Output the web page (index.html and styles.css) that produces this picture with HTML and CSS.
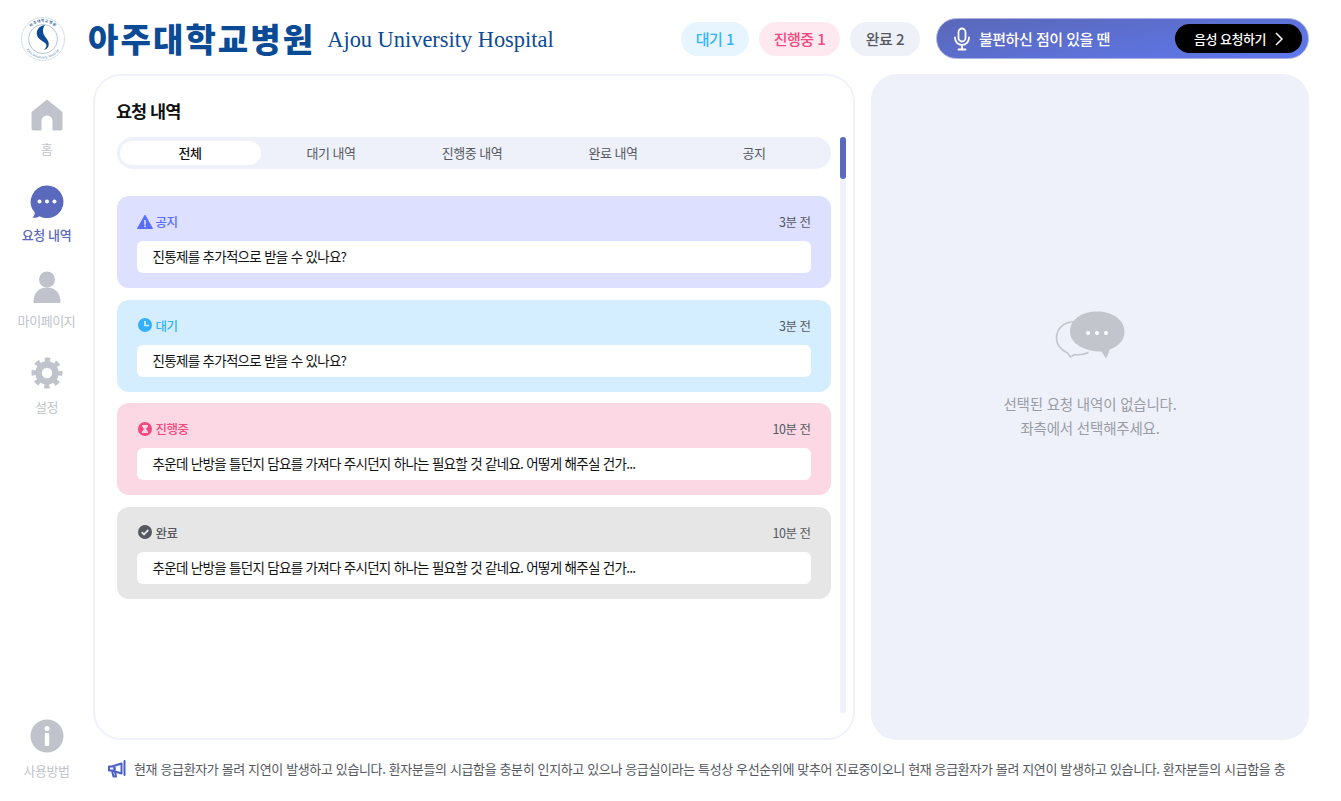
FILE: index.html
```html
<!DOCTYPE html>
<html lang="ko">
<head>
<meta charset="utf-8">
<title>요청 내역</title>
<link rel="stylesheet" href="styles.css">
</head>
<body>
<div class="app">
  <header class="header">
    <div class="brand">
      <svg class="logo" viewBox="0 0 44 46" width="44" height="46">
        <defs>
          <path id="ring-top" d="M5 23a17 17 0 0 1 34 0"/>
          <path id="ring-bot" d="M2.500 23a19.500 19.500 0 0 0 39 0"/>
        </defs>
        <circle cx="22" cy="23" r="21.500" fill="none" stroke="#9db5d3" stroke-width=".7" stroke-dasharray="1 .6"/>
        <circle cx="22" cy="23" r="14.500" fill="none" stroke="#7f9fc6" stroke-width=".6"/>
        <text class="logo-ring"><textPath href="#ring-top" startOffset="50%" text-anchor="middle">아주대학교병원</textPath></text>
        <text class="logo-ring logo-ring-en"><textPath href="#ring-bot" startOffset="50%" text-anchor="middle">Ajou University Hospital</textPath></text>
        <path d="M24 9C18 10 15 14 16 19 17 24 23 25 25 28 26 30 25 32 23 34 27 33 29 29 27 25 25 21 22 19 22 15 22 12 23 10 24 9z" fill="#0b4a94"/>
      </svg>
      <span class="brand-ko">아주대학교병원</span>
      <span class="brand-en">Ajou University Hospital</span>
    </div>
    <div class="header-right">
      <span class="pill pill-wait">대기 1</span>
      <span class="pill pill-prog">진행중 1</span>
      <span class="pill pill-done">완료 2</span>
      <div class="voice">
        <svg class="voice-mic" viewBox="0 0 18 24" width="18" height="24" fill="none" stroke="#fff" stroke-width="1.800" stroke-linecap="round">
          <rect x="5.500" y="1.500" width="7" height="13" rx="3.500"/>
          <path d="M2 10.500c0 4.500 3 7.500 7 7.500s7-3 7-7.500M9 18v4M5.500 22.500h7"/>
        </svg>
        <span class="voice-text">불편하신 점이 있을 땐</span>
        <span class="voice-btn">음성 요청하기
          <svg viewBox="0 0 8 14" width="8" height="14" fill="none" stroke="#fff" stroke-width="1.500"><path d="M1 1l6 6-6 6"/></svg>
        </span>
      </div>
    </div>
  </header>

  <nav class="side">
    <div class="side-top">
      <a class="nav">
        <svg viewBox="0 0 32 32" width="32" height="32"><path d="M16 0.500 31.500 13v16.500a2 2 0 0 1-2 2H21.500V22a5.500 5.500 0 0 0-11 0v9.500H2.500a2 2 0 0 1-2-2V13z" fill="#c1c3cc"/></svg>
        <span>홈</span>
      </a>
      <a class="nav nav-on">
        <svg viewBox="0 -1 34 34" width="34" height="34"><path d="M17 .5a16.300 16.300 0 1 1-7.500 30.700c-2 1.300-4.500 1.800-7 1.500 1.500-1.500 2.300-3.300 2.300-5.200A16.300 16.300 0 0 1 17 .5z" fill="#5b69bd"/><circle cx="9.500" cy="16.500" r="2" fill="#fff"/><circle cx="17" cy="16.500" r="2" fill="#fff"/><circle cx="24.500" cy="16.500" r="2" fill="#fff"/></svg>
        <span>요청 내역</span>
      </a>
      <a class="nav">
        <svg viewBox="0 0 28 32" width="28" height="32"><circle cx="14" cy="8.500" r="8" fill="#c1c3cc"/><path d="M0.500 31c0-9 5-14.500 13.500-14.500S27.500 22 27.500 31a1 1 0 0 1-1 1h-25a1 1 0 0 1-1-1z" fill="#c1c3cc"/></svg>
        <span>마이페이지</span>
      </a>
      <a class="nav">
        <svg viewBox="0 0 32 32" width="32" height="32" fill="none" stroke="#c1c3cc"><circle cx="16" cy="16" r="8.500" stroke-width="6.500"/><circle cx="16" cy="16" r="13" stroke-width="5" stroke-dasharray="5.110 5.100" stroke-dashoffset="2.550"/></svg>
        <span>설정</span>
      </a>
    </div>
    <a class="nav nav-help">
      <svg viewBox="0 0 34 34" width="34" height="34"><circle cx="17" cy="17" r="16.500" fill="#c1c3cc"/><circle cx="17" cy="9.500" r="2.500" fill="#fff"/><rect x="14.800" y="14" width="4.400" height="13" rx="1" fill="#fff"/></svg>
      <span>사용방법</span>
    </a>
  </nav>

  <section class="list-panel">
    <h1 class="list-title">요청 내역</h1>
    <div class="list-body">
      <div class="list-main">
        <div class="tabs">
          <span class="tab tab-on">전체</span>
          <span class="tab">대기 내역</span>
          <span class="tab">진행중 내역</span>
          <span class="tab">완료 내역</span>
          <span class="tab">공지</span>
        </div>
        <div class="cards">
          <article class="card card-notice">
            <div class="card-head">
              <span class="status">
                <svg viewBox="0 0 16 16" width="16" height="16"><path d="M8 1.200 15.500 14.500H.5z" fill="currentColor" stroke="currentColor" stroke-linejoin="round"/><rect x="7.200" y="6" width="1.600" height="4.800" fill="#dee0ff"/><rect x="7.200" y="11.500" width="1.600" height="1.600" fill="#dee0ff"/></svg>공지</span>
              <time>3분 전</time>
            </div>
            <p class="card-msg">진통제를 추가적으로 받을 수 있나요?</p>
          </article>
          <article class="card card-wait">
            <div class="card-head">
              <span class="status">
                <svg viewBox="0 0 16 16" width="16" height="16"><circle cx="8" cy="8" r="7" fill="currentColor"/><path d="M8 4v4.500h4" fill="none" stroke="#d5eeff" stroke-width="1.700"/></svg>대기</span>
              <time>3분 전</time>
            </div>
            <p class="card-msg">진통제를 추가적으로 받을 수 있나요?</p>
          </article>
          <article class="card card-prog">
            <div class="card-head">
              <span class="status">
                <svg viewBox="0 0 16 16" width="16" height="16"><circle cx="8" cy="8" r="7" fill="currentColor"/><path d="M5 4h6v1.300L9 8l2 2.700V12H5v-1.300L7 8 5 5.300z" fill="#fbd8e3"/></svg>진행중</span>
              <time>10분 전</time>
            </div>
            <p class="card-msg">추운데 난방을 틀던지 담요를 가져다 주시던지 하나는 필요할 것 같네요. 어떻게 해주실 건가...</p>
          </article>
          <article class="card card-done">
            <div class="card-head">
              <span class="status">
                <svg viewBox="0 0 16 16" width="16" height="16"><circle cx="8" cy="8" r="7" fill="currentColor"/><path d="M4.700 8.200 7 10.400l4.300-4.400" fill="none" stroke="#e6e6e6" stroke-width="1.800"/></svg>완료</span>
              <time>10분 전</time>
            </div>
            <p class="card-msg">추운데 난방을 틀던지 담요를 가져다 주시던지 하나는 필요할 것 같네요. 어떻게 해주실 건가...</p>
          </article>
        </div>
      </div>
      <div class="scroll"><div class="scroll-thumb"></div></div>
    </div>
  </section>

  <section class="detail">
    <svg class="detail-icon" viewBox="0 0 70 50" width="70" height="50">
      <path d="M20 10.500C8 11 1.500 18 1.500 27c0 7 5 12 11 15l3 4 4-2.500c5 .5 10 0 14-2" fill="none" stroke="#c4c6ce" stroke-width="1.600"/>
      <path d="M42 .5c15 0 27.500 8 27.500 20 0 9-6 15-15 18-.5 3-2 6-3.500 9-1.500-2.500-3-5-5-7-15 0-31-7-31-20C15 8 28 .5 42 .5z" fill="#c3c5cd"/>
      <circle cx="33" cy="22" r="2" fill="#fff"/><circle cx="42" cy="22" r="2" fill="#fff"/><circle cx="51" cy="22" r="2" fill="#fff"/>
    </svg>
    <p class="detail-text">선택된 요청 내역이 없습니다.<br>좌측에서 선택해주세요.</p>
  </section>

  <footer class="ticker">
    <svg viewBox="0 0 19 18" width="19" height="18" fill="none" stroke="#4a5fc1" stroke-width="2" stroke-linejoin="round"><path d="M17.500 1v14" stroke-linecap="round"/><path d="M14.500 3.500 5 6.500H2v4h3l9.500 3z"/><path d="M7.500 7v3.300" stroke-width="2.500"/><path d="M5 11l1.500 5.500H9L8 11.500"/></svg>
    <p class="ticker-text">현재 응급환자가 몰려 지연이 발생하고 있습니다. 환자분들의 시급함을 충분히 인지하고 있으나 응급실이라는 특성상 우선순위에 맞추어 진료중이오니 현재 응급환자가 몰려 지연이 발생하고 있습니다. 환자분들의 시급함을 충</p>
  </footer>
</div>
</body>
</html>
```
FILE: styles.css
```css
* { box-sizing: border-box; margin: 0; padding: 0; }
html, body { width: 1341px; height: 801px; overflow: hidden; background: #fff; }
body { font-family: "Noto Sans CJK KR", "Noto Sans", sans-serif; color: #111; letter-spacing: -0.5px; }

.app {
  display: grid;
  grid-template-columns: 93px 762px 454px;
  grid-template-rows: 74px 666px 61px;
  width: 1341px;
  height: 801px;
}

/* header */
.header {
  grid-column: 1 / -1;
  display: flex;
  align-items: center;
  justify-content: space-between;
  padding: 3px 0 0 21px;
}
.brand { display: flex; align-items: center; }
.logo { flex: none; }
.logo-ring { font-size: 3.600px; font-weight: 700; fill: #2d5f9e; letter-spacing: .5px; }
.logo-ring-en { font-size: 3px; font-weight: 400; letter-spacing: .2px; }
.brand-ko { margin-left: 23px; font-size: 33px; font-weight: 900; color: #0b4a94; letter-spacing: 2.100px; line-height: 1; }
.brand-en { margin: 3px 0 0 12px; font-family: "Liberation Serif", serif; font-size: 22.400px; color: #0b4a94; letter-spacing: 0; line-height: 1; }

.header-right { display: flex; align-items: center; }
.pill { display: flex; align-items: center; justify-content: center; height: 34px; border-radius: 17px; font-size: 15px; font-weight: 500; margin-right: 10px; }
.pill-wait { width: 68px; background: #e6f5ff; color: #35b3ff; }
.pill-prog { width: 81px; background: #ffe9f0; color: #f5487f; }
.pill-done { width: 70px; background: #eef1f8; color: #55585f; margin-right: 16px; }

.voice {
  display: flex;
  align-items: center;
  width: 373px;
  height: 41px;
  padding: 0 6px 0 16px;
  border: 1px solid #a9b2e0;
  border-radius: 21px;
  background: linear-gradient(170deg, #5a68b8, #5f78ee);
}
.voice-mic { flex: none; }
.voice-text { margin-left: 8px; color: #fff; font-size: 15px; font-weight: 500; }
.voice-btn {
  display: flex; align-items: center; justify-content: center; gap: 9px;
  margin-left: auto; width: 127px; height: 29px;
  border-radius: 15px; background: #000; color: #fff; font-size: 13px; font-weight: 500;
}

/* sidebar */
.side { grid-row: 2 / 4; grid-column: 1; display: flex; flex-direction: column; justify-content: space-between; padding: 24px 0 21px; }
.side-top { display: flex; flex-direction: column; }
.nav { display: flex; flex-direction: column; align-items: center; height: 86px; font-size: 13px; letter-spacing: -0.4px; color: #c1c3cc; }
.nav svg { height: 34px; flex: none; }
.nav span { margin-top: 7px; line-height: 19px; }
.nav-on { color: #5b69bd; font-weight: 500; }
.nav-help { height: auto; }
.nav-help span { margin-top: 8px; }

/* list panel */
.list-panel {
  grid-row: 2; grid-column: 2;
  display: flex; flex-direction: column;
  padding: 23px 7px 24px 21.500px;
  border: 2px solid #f0f2fa;
  border-radius: 28px;
  background: #fff;
}
.list-title { margin-left: -0.500px; font-size: 17.500px; font-weight: 700; line-height: 24px; letter-spacing: -1px; color: #111; }
.list-body { display: flex; flex: 1; margin-top: 14px; min-height: 0; }
.list-main { width: 714px; flex: none; }
.tabs { display: grid; grid-template-columns: repeat(5, 141px); height: 32px; padding: 4px 3px; border-radius: 16px; background: #eef1f9; }
.tab { display: flex; align-items: center; justify-content: center; padding-bottom: 1px; font-size: 13px; color: #55585f; border-radius: 12px; }
.tab-on { background: #fff; color: #111; font-weight: 500; }

.cards { display: flex; flex-direction: column; gap: 11.670px; margin-top: 27px; }
.card { height: 92px; padding: 14.500px 20px 0; border-radius: 12px; }
.card-head { display: flex; align-items: center; justify-content: space-between; height: 22px; margin-bottom: 8.500px; }
.status { display: flex; align-items: center; gap: 3px; font-size: 12.500px; font-weight: 500; }
.status svg { flex: none; }
time { font-size: 12.500px; color: #55585f; }
.card-msg { height: 32px; padding-left: 16px; border-radius: 6px; background: #fff; font-size: 13.500px; letter-spacing: -0.7px; line-height: 30px; color: #111; }
.card-notice { background: #dee0ff; }
.card-notice .status { color: #5a6dff; }
.card-wait { background: #d5eeff; }
.card-wait .status { color: #33b1ff; }
.card-prog { background: #fbd8e3; }
.card-prog .status { color: #f5487f; }
.card-done { background: #e6e6e6; }
.card-done .status { color: #55585f; }

.scroll { width: 6px; height: 576px; margin-left: 9.500px; border-radius: 3px; background: #f0f2fa; }
.scroll-thumb { height: 42px; border-radius: 3px; background: #5b69bd; }

/* detail */
.detail {
  grid-row: 2; grid-column: 3;
  margin-left: 16px;
  display: flex; flex-direction: column; align-items: center;
  padding-top: 237px;
  border-radius: 26px;
  background: #eef1f9;
}
.detail-text { margin-top: 31px; text-align: center; font-size: 14.500px; letter-spacing: -0.200px; line-height: 24px; color: #9a9ca6; }

/* ticker */
.ticker { grid-row: 3; grid-column: 2 / 4; display: flex; align-items: flex-start; gap: 7px; padding: 19px 0 0 15px; }
.ticker svg { flex: none; margin-top: 1px; margin-left: -1px; }
.ticker-text { white-space: nowrap; font-size: 13px; letter-spacing: -0.37px; line-height: 20px; color: #55585f; margin-left: 1px; }
```
